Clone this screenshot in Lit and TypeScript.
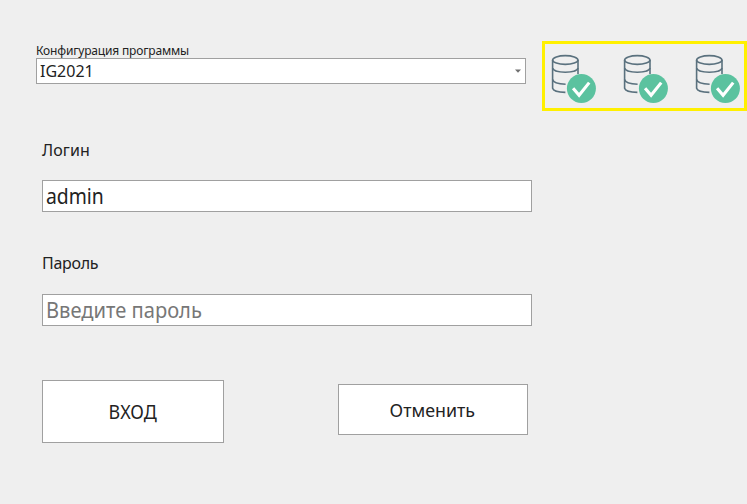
import { LitElement, html, css } from "lit";
import { customElement } from "lit/decorators.js";

@customElement("db-status")
class DbStatus extends LitElement {
  static styles = css`
    :host { display: block; width: 46px; height: 50px; }
    svg { display: block; }
    .db { fill: none; stroke: #5a717e; stroke-width: 1.6; }
    .ok { fill: #5bc29f; }
    .tick { fill: none; stroke: #fff; stroke-width: 3.1; }
  `;
  render() {
    return html`<svg width="46" height="50" viewBox="0.2 0 46 50">
      <g class="db">
        <ellipse cx="14.5" cy="6" rx="12.7" ry="4.4" />
        <path d="M1.8 6V34.2C2.4 36.4 7.5 38.2 14.6 38.4" />
        <path d="M27.2 6V20" />
        <path d="M1.8 14C2.4 19.6 26.6 19.6 27.2 14" />
        <path d="M1.8 25.5C2.4 28.2 7.5 30 14.8 30.2" />
      </g>
      <circle class="ok" cx="30.6" cy="34.6" r="14.5" />
      <path class="tick" d="M22.3 34.2L28.3 41.3L38.4 28.6" />
    </svg>`;
  }
}

@customElement("app-root")
class AppRoot extends LitElement {
  static styles = css`
    :host {
      display: block;
      box-sizing: border-box;
      width: 747px;
      height: 504px;
      overflow: hidden;
      background: #efefef;
      color: #222;
      font-family: "Noto Sans", sans-serif;
      white-space: nowrap;
    }
    * { box-sizing: border-box; }
    .top { display: flex; justify-content: space-between; padding: 41px 0 0 36px; height: 111px; }
    .config { width: 490px; }
    .caption { font-size: 12px; height: 17px; line-height: 19px; letter-spacing: -0.17px; }
    .box { background: #fff; border: 1px solid #a0a0a0; }
    .combo { display: flex; align-items: center; justify-content: space-between; height: 26px; padding: 0 4px 0 3px; font-size: 16px; }
    .arrow { width: 6px; height: 4px; fill: #707070; }
    .statuses { display: flex; gap: 26px; width: 205px; height: 70px; padding: 10px 0 0 6px; border: 3px solid #fff000; }
    .form { padding: 27px 0 0 42px; }
    .label { height: 42px; line-height: 24px; font-size: 16px; letter-spacing: 0.1px; }
    .field { display: flex; align-items: center; width: 490px; height: 32px; padding: 0 0 2px 3px; font-size: 22px; }
    .field + .label { margin-top: 39px; height: 43px; letter-spacing: -0.3px; }
    .placeholder { color: #777; }
    .login-text { transform: scaleX(0.88); transform-origin: left; }
    .hint-text { transform: scaleX(0.915); transform-origin: left; }
    .actions { display: flex; align-items: flex-start; gap: 114px; margin-top: 54px; }
    .button { display: flex; align-items: center; justify-content: center; }
    .enter { width: 182px; height: 63px; font-size: 19px; }
    .enter span { transform: scaleX(0.94); }
    .cancel { width: 190px; height: 51px; margin-top: 4px; padding-right: 2px; font-size: 18.5px; }
    .cancel span { transform: scaleX(0.965); }
  `;
  render() {
    return html`
      <div class="top">
        <div class="config">
          <div class="caption">Конфигурация программы</div>
          <div class="box combo">
            <span>IG2021</span>
            <svg class="arrow" viewBox="0 0 6 4"><path d="M0 0.5H6L3 3.7Z" /></svg>
          </div>
        </div>
        <div class="statuses"><db-status></db-status><db-status></db-status><db-status></db-status></div>
      </div>
      <div class="form">
        <div class="label">Логин</div>
        <div class="box field"><span class="login-text">admin</span></div>
        <div class="label">Пароль</div>
        <div class="box field placeholder"><span class="hint-text">Введите пароль</span></div>
        <div class="actions">
          <div class="box button enter"><span>ВХОД</span></div>
          <div class="box button cancel"><span>Отменить</span></div>
        </div>
      </div>`;
  }
}
